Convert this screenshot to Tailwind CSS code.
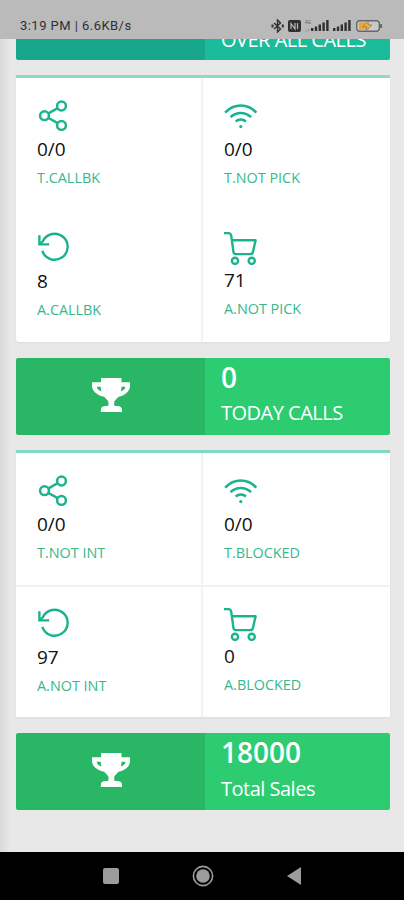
<!DOCTYPE html>
<html lang="en">
<head>
    <meta charset="UTF-8">
    <meta name="viewport" content="width=device-width, initial-scale=1.0">
    <title>Calls Dashboard</title>
    <script src="https://cdn.jsdelivr.net/npm/@tailwindcss/browser@4"></script>
</head>
<body class="bg-[#e8e8e8] font-['Open_Sans',sans-serif]">
    <!-- Shared icons -->
    <svg class="hidden">
        <symbol id="share" viewBox="0 0 32 32">
            <g fill="none" stroke="currentColor" stroke-width="2.5">
                <circle cx="24.5" cy="6" r="4.4"/><circle cx="7.5" cy="15.7" r="4.4"/><circle cx="24.5" cy="25.4" r="4.4"/>
                <path d="M11.5 13.4l9.2-5.2M11.5 18l9.2 5.2"/>
            </g>
        </symbol>
        <symbol id="wifi" viewBox="0 0 32 32">
            <g fill="none" stroke="currentColor" stroke-width="2.5">
                <path d="M.6 12.6c9-9.4 22.8-9.4 31.2 0M6 17.2c5.8-5.7 14.8-5.7 20.6 0M11.2 21.5c3-2.7 7.4-2.7 10.2 0"/>
            </g>
            <circle cx="16.3" cy="26.6" r="1.6" fill="currentColor"/>
        </symbol>
        <symbol id="reload" viewBox="0 0 32 32">
            <g fill="none" stroke="currentColor" stroke-width="2.4">
                <path d="M5.300 18.800A13 13 0 1 0 6 9L2.400 12.400"/>
                <path d="M2.400 3.200v9.200h9.800"/>
            </g>
        </symbol>
        <symbol id="cart" viewBox="0 0 33 34">
            <g fill="none" stroke="currentColor" stroke-width="2.4" stroke-linejoin="round">
                <path d="M0 2.1h4.600c1.600 0 2.300 1 2.600 2.600l2.200 16c.2 1.500 1 2.400 2.400 2.400h14.600c1.400 0 2.100-.6 2.500-2L31.600 9.300H8"/>
                <circle cx="11" cy="29.800" r="3.100"/><circle cx="27.700" cy="29.800" r="3.100"/>
            </g>
        </symbol>
        <symbol id="trophy" viewBox="0 0 38 34">
            <path fill="currentColor" fill-rule="evenodd" d="M9 0h20.500v4.300H38v4c0 5-5.500 9.600-11.500 10.400-1.700 2-3.800 3.300-4.300 5.300v2.400c0 1.600 1.300 1.700 3.200 1.700 2.700 0 4.600 1.200 4.600 3.600V34H8.800v-2.300c0-2.400 1.800-3.600 4.500-3.600 1.800 0 3.200-.2 3.200-1.700V24c-.5-2-2.600-3.300-4.300-5.300C6 17.900 0 13.300 0 8.300v-4h9zM4.800 8.800c0 2 1.900 3.900 4.600 4.600C8.900 11.900 8.700 10.300 8.700 8.800zm24.700 0c0 1.500-.2 3.100-.7 4.600 2.700-.7 4.600-2.600 4.600-4.600z"/>
        </symbol>
        <symbol id="signal" viewBox="0 0 18 11">
            <path fill="currentColor" d="M0 8h2.400v3H0zM3.800 6.500h2.400V11H3.800zM7.600 4.500H10V11H7.600zM11.400 2.500h2.400V11h-2.400zM15.200 0h2.400v11h-2.400z"/>
        </symbol>
    </svg>

    <div class="w-[404px] h-[900px] flex flex-col overflow-hidden">
        <!-- Status bar -->
        <header class="h-[39px] shrink-0 bg-[#bababa] text-[#303030] flex justify-between pl-[20px] pr-[22px] pt-[17px] font-[Roboto,sans-serif]">
            <span class="text-[13px] leading-[18px] tracking-[0.035em]">3:19 PM | 6.6KB/s</span>
            <div class="flex items-center h-[17px]">
                <svg class="w-[13px] h-[14px]" viewBox="0 0 13 14" fill="none" stroke="currentColor" stroke-width="1.400"><path d="M3 4l6.500 6L6.500 13V1l3 3L3 10"/><path d="M1.500 5.500v3M11.800 5.500v3" stroke-width="2"/></svg>
                <svg class="w-[13px] h-[12px] ml-[4px]" viewBox="0 0 13 12"><rect width="13" height="12" rx="2" fill="currentColor"/><path d="M3 9V3.500L7 9V3M9.500 3v6" fill="none" stroke="#bababa" stroke-width="1.200"/></svg>
                <div class="flex flex-col ml-[4px] text-[5px] leading-[8px] text-[#666]"><span>4G</span><span>↓↑</span></div>
                <svg class="w-[18px] h-[11px]"><use href="#signal"/></svg>
                <svg class="w-[18px] h-[11px] ml-[4px]"><use href="#signal"/></svg>
                <svg class="w-[26px] h-[12px] ml-[5px]" viewBox="0 0 26 12">
                    <rect x=".7" y=".7" width="22.600" height="10.600" rx="3" fill="#c9c9c9" stroke="#686868" stroke-width="1.400"/>
                    <path d="M3 2.500h10v7H3z" fill="#efa12b"/><path d="M12 1.500L7 6.700h4l-1 3.800 6-5.600h-4z" fill="#ffb52e" stroke="#777" stroke-width=".7"/>
                    <path d="M24 4h2v4h-2z" fill="#686868"/>
                </svg>
            </div>
        </header>

        <main class="flex-1 overflow-hidden flex flex-col pl-[16px] pr-[14px] bg-linear-to-r from-[#d8d9d9] via-[#e8e8e8] via-[10px] to-[#e8e8e8]">
            <!-- Banner scrolled under the status bar -->
            <section class="h-[21px] shrink-0 flex overflow-hidden rounded-b-[2px] text-white">
                <div class="w-[189px] bg-[#18a78b]"></div>
                <div class="flex-1 bg-[#1abc9c] pl-[16px]">
                    <p class="text-[20px] leading-[28px] -mt-[13px] tracking-[-0.025em] whitespace-nowrap">OVER ALL CALLS</p>
                </div>
            </section>

            <section class="h-[267px] shrink-0 mt-[15px] bg-white border-t-[3px] border-[#8bdcc3] rounded-b-[3px] shadow-xs grid grid-cols-[187px_1fr] grid-rows-2">
                <div class="border-r-2 border-[#f2f2f2] pl-[21px] pt-[22px]">
                    <svg class="w-[32px] h-[32px] text-[#1bb38d]"><use href="#share"/></svg>
                    <p class="mt-[5px] text-[19px] leading-[24px] text-[#111]">0/0</p>
                    <p class="mt-[7px] text-[14.400px] leading-[20px] text-[#36b88c]">T.CALLBK</p>
                </div>
                <div class="pl-[21px] pt-[22px]">
                    <svg class="w-[33px] h-[32px] text-[#1bb38d]"><use href="#wifi"/></svg>
                    <p class="mt-[5px] text-[19px] leading-[24px] text-[#111]">0/0</p>
                    <p class="mt-[7px] text-[14.400px] leading-[20px] text-[#36b88c]">T.NOT PICK</p>
                </div>
                <div class="border-r-2 border-[#f2f2f2] pl-[21px] pt-[22px]">
                    <svg class="w-[32px] h-[32px] text-[#1bb38d]"><use href="#reload"/></svg>
                    <p class="mt-[5px] text-[19px] leading-[24px] text-[#111]">8</p>
                    <p class="mt-[7px] text-[14.400px] leading-[20px] text-[#36b88c]">A.CALLBK</p>
                </div>
                <div class="pl-[21px] pt-[21px]">
                    <svg class="w-[33px] h-[34px] text-[#1bb38d]"><use href="#cart"/></svg>
                    <p class="mt-[3px] text-[19px] leading-[24px] text-[#111]">71</p>
                    <p class="mt-[7px] text-[14.400px] leading-[20px] text-[#36b88c]">A.NOT PICK</p>
                </div>
            </section>

            <section class="h-[77px] shrink-0 mt-[16px] flex overflow-hidden rounded-[2px] text-white">
                <div class="w-[189px] bg-[#2ab765] flex items-center justify-center">
                    <svg class="w-[38px] h-[34px] -mt-[3px]"><use href="#trophy"/></svg>
                </div>
                <div class="flex-1 bg-[#2ecc71] pl-[16px]">
                    <p class="text-[28px] leading-[38px] font-semibold">0</p>
                    <p class="text-[20px] leading-[28px] mt-[3px] tracking-[-0.025em]">TODAY CALLS</p>
                </div>
            </section>

            <section class="h-[267px] shrink-0 mt-[15px] bg-white border-t-[3px] border-[#7fd8c4] shadow-xs grid grid-cols-[187px_1fr] grid-rows-2">
                <div class="border-r-2 border-[#f2f2f2] pl-[21px] pt-[22px]">
                    <svg class="w-[32px] h-[32px] text-[#1bb38d]"><use href="#share"/></svg>
                    <p class="mt-[5px] text-[19px] leading-[24px] text-[#111]">0/0</p>
                    <p class="mt-[7px] text-[14.400px] leading-[20px] text-[#36b88c]">T.NOT INT</p>
                </div>
                <div class="pl-[21px] pt-[22px]">
                    <svg class="w-[33px] h-[32px] text-[#1bb38d]"><use href="#wifi"/></svg>
                    <p class="mt-[5px] text-[19px] leading-[24px] text-[#111]">0/0</p>
                    <p class="mt-[7px] text-[14.400px] leading-[20px] text-[#36b88c]">T.BLOCKED</p>
                </div>
                <div class="border-r-2 border-t-2 border-[#f2f2f2] pl-[21px] pt-[21px]">
                    <svg class="w-[32px] h-[32px] text-[#1bb38d]"><use href="#reload"/></svg>
                    <p class="mt-[5px] text-[19px] leading-[24px] text-[#111]">97</p>
                    <p class="mt-[7px] text-[14.400px] leading-[20px] text-[#36b88c]">A.NOT INT</p>
                </div>
                <div class="border-t-2 border-[#f2f2f2] pl-[21px] pt-[20px]">
                    <svg class="w-[33px] h-[34px] text-[#1bb38d]"><use href="#cart"/></svg>
                    <p class="mt-[3px] text-[19px] leading-[24px] text-[#111]">0</p>
                    <p class="mt-[7px] text-[14.400px] leading-[20px] text-[#36b88c]">A.BLOCKED</p>
                </div>
            </section>

            <section class="h-[77px] shrink-0 mt-[16px] flex overflow-hidden rounded-[2px] text-white">
                <div class="w-[189px] bg-[#2ab765] flex items-center justify-center">
                    <svg class="w-[38px] h-[34px] -mt-[3px]"><use href="#trophy"/></svg>
                </div>
                <div class="flex-1 bg-[#2ecc71] pl-[16px]">
                    <p class="text-[28px] leading-[38px] font-semibold">18000</p>
                    <p class="text-[20px] leading-[28px] mt-[4px] tracking-[-0.025em]">Total Sales</p>
                </div>
            </section>
        </main>

        <!-- Android navigation -->
        <nav class="h-[48px] shrink-0 bg-black text-[#9c9c9c] flex items-center pl-[103px]">
            <div class="w-[16px] h-[16px] rounded-[2px] bg-[#9c9c9c]"></div>
            <svg class="w-[22px] h-[22px] ml-[73px]" viewBox="0 0 22 22"><circle cx="11" cy="11" r="9.600" fill="none" stroke="currentColor" stroke-width="1.600"/><circle cx="11" cy="11" r="6.800" fill="currentColor"/></svg>
            <svg class="w-[14px] h-[18px] ml-[73px]" viewBox="0 0 14 18"><path d="M14 0v18L0 9z" fill="currentColor"/></svg>
        </nav>
    </div>
</body>
</html>
